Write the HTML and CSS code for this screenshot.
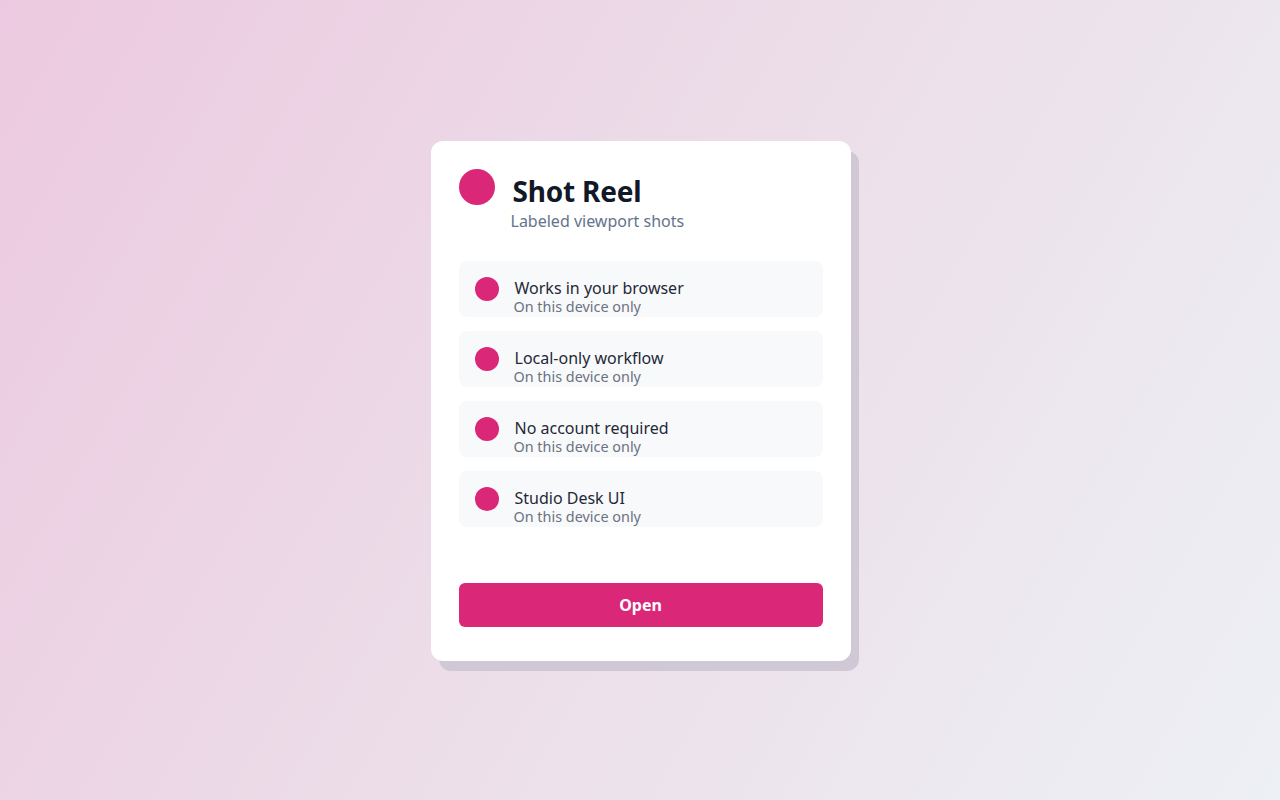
FILE: index.html
```html
<!DOCTYPE html>
<html lang="en">
<head>
<meta charset="utf-8">
<title>Shot Reel</title>
<link rel="stylesheet" href="styles.css">
</head>
<body>
<main class="stage">
  <section class="card">
    <header class="card-head">
      <span class="logo-dot"></span>
      <div class="head-text">
        <h1 class="title">Shot Reel</h1>
        <p class="subtitle">Labeled viewport shots</p>
      </div>
    </header>
    <ul class="features">
      <li class="feature">
        <span class="feature-dot"></span>
        <div class="feature-text">
          <span class="feature-title">Works in your browser</span>
          <span class="feature-sub">On this device only</span>
        </div>
      </li>
      <li class="feature">
        <span class="feature-dot"></span>
        <div class="feature-text">
          <span class="feature-title">Local-only workflow</span>
          <span class="feature-sub">On this device only</span>
        </div>
      </li>
      <li class="feature">
        <span class="feature-dot"></span>
        <div class="feature-text">
          <span class="feature-title">No account required</span>
          <span class="feature-sub">On this device only</span>
        </div>
      </li>
      <li class="feature">
        <span class="feature-dot"></span>
        <div class="feature-text">
          <span class="feature-title">Studio Desk UI</span>
          <span class="feature-sub">On this device only</span>
        </div>
      </li>
    </ul>
    <button class="open-btn" type="button">Open</button>
  </section>
</main>
</body>
</html>
```
FILE: styles.css
```css
* { box-sizing: border-box; }
html, body { margin: 0; padding: 0; }
body {
  width: 1280px;
  height: 800px;
  font-family: "Noto Sans", "Open Sans", sans-serif;
  background: linear-gradient(120deg, #ecc9e0 0%, #ecdce8 45%, #edf0f5 100%);
  overflow: hidden;
}
.stage {
  height: 800px;
  display: flex;
  align-items: flex-start;
  justify-content: center;
  padding-top: 141px;
}
.card {
  width: 420px;
  height: 520px;
  background: #ffffff;
  border-radius: 12px;
  box-shadow: 8px 10px 0 0 #d1c8d6;
  padding: 28px 28px 34px;
  display: flex;
  flex-direction: column;
  margin-left: 1px;
}
.card-head {
  display: flex;
  align-items: flex-start;
  gap: 18px;
}
.logo-dot {
  width: 36px;
  height: 36px;
  border-radius: 50%;
  background: #db2777;
  flex: none;
}
.head-text { padding-top: 3px; }
.title {
  margin: 0;
  font-size: 28px;
  font-weight: 700;
  line-height: 38px;
  color: #111827;
  letter-spacing: -0.2px;
}
.subtitle {
  margin: 0;
  font-size: 16px;
  line-height: 22px;
  color: #64748b;
  margin-left: -2px;
}
.features {
  list-style: none;
  margin: 29px 0 0;
  padding: 0;
  display: flex;
  flex-direction: column;
  gap: 14px;
}
.feature {
  height: 56px;
  background: #f8f9fb;
  border-radius: 8px;
  display: flex;
  align-items: center;
  padding: 0 16px;
  gap: 16px;
}
.feature-dot {
  width: 24px;
  height: 24px;
  border-radius: 50%;
  background: #db2777;
  flex: none;
  margin-top: -1px;
}
.feature-text {
  display: flex;
  flex-direction: column;
  padding-top: 16px;
}
.feature-title {
  font-size: 16px;
  line-height: 19px;
  color: #1f2937;
}
.feature-sub {
  font-size: 14.4px;
  line-height: 17px;
  color: #6b7280;
  margin-left: -1px;
}
.open-btn {
  margin-top: auto;
  height: 44px;
  border: none;
  border-radius: 6px;
  background: #db2777;
  color: #ffffff;
  font-family: inherit;
  font-size: 16px;
  font-weight: 700;
}
```
